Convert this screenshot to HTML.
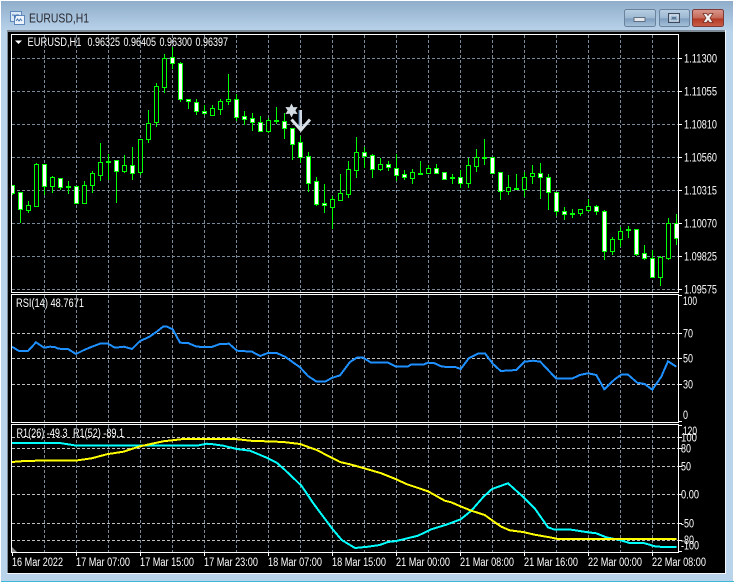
<!DOCTYPE html>
<html><head><meta charset="utf-8"><title>EURUSD,H1</title>
<style>
html,body{margin:0;padding:0;background:#fff;width:736px;height:582px;overflow:hidden}
svg{display:block}
text{font-family:"Liberation Sans",sans-serif;font-size:11.5px;fill:#fff}
</style></head><body>
<svg width="736" height="582" viewBox="0 0 736 582" xmlns="http://www.w3.org/2000/svg">
<defs>
<linearGradient id="tb" x1="0" y1="0" x2="0" y2="1"><stop offset="0" stop-color="#8fadca"/><stop offset="1" stop-color="#b9d2ea"/></linearGradient>
<linearGradient id="bt" x1="0" y1="0" x2="0" y2="1"><stop offset="0" stop-color="#b9cfe3"/><stop offset=".5" stop-color="#9cb8d2"/><stop offset=".55" stop-color="#7f9fbf"/><stop offset="1" stop-color="#a6c2dc"/></linearGradient>
<linearGradient id="cl" x1="0" y1="0" x2="0" y2="1"><stop offset="0" stop-color="#d8988c"/><stop offset=".5" stop-color="#c66a58"/><stop offset=".55" stop-color="#b53a24"/><stop offset="1" stop-color="#c8604a"/></linearGradient>
<clipPath id="p1"><rect x="12" y="35" width="666" height="257"/></clipPath>
<clipPath id="p2"><rect x="12" y="295" width="666" height="127"/></clipPath>
<clipPath id="p3"><rect x="12" y="425" width="666" height="127"/></clipPath>
</defs>
<path d="M1 4Q1 1 4 1H730Q733 1 733 4V582H1Z" fill="#b8d3ea"/>
<rect x="1" y="1" width="732" height="30" fill="url(#tb)"/>
<rect x="1" y="581" width="733" height="1" fill="#3fb9d9"/>
<rect x="7" y="30" width="718" height="2" fill="#7d8a96"/>
<rect x="7" y="32" width="718" height="541" fill="#000"/>
<rect x="7" y="30" width="1" height="544" fill="#7d8a96"/>
<rect x="7" y="573" width="718" height="1" fill="#f4f8fb"/>
<rect x="725" y="30" width="1" height="544" fill="#f4f8fb"/>
<g shape-rendering="crispEdges">
<rect x="10.5" y="11.5" width="11" height="10" fill="#dbe8f6" stroke="#5e87bb"/>
<rect x="14.5" y="15.5" width="10" height="9" fill="#eef4fb" stroke="#5e87bb"/>
</g>
<path d="M12 15h2l1 3 1-3h3M16 21l1.500-2 1.500 2 1.500-2 1.500 2" fill="none" stroke="#4a78b5" stroke-width="1"/>
<text x="29" y="22.500" textLength="60" lengthAdjust="spacingAndGlyphs" style="font-size:12.500px;fill:#2a2a30">EURUSD,H1</text>
<rect x="624.500" y="9.500" width="31" height="17" rx="2" fill="url(#bt)" stroke="#6a829c"/>
<rect x="659.500" y="9.500" width="30" height="17" rx="2" fill="url(#bt)" stroke="#6a829c"/>
<rect x="692.500" y="9.500" width="31" height="17" rx="2" fill="url(#cl)" stroke="#7e3a34"/>
<rect x="634" y="17.500" width="11" height="4" fill="#e4e8ec" stroke="#4c5a6a" stroke-width=".8"/>
<rect x="668.500" y="13.500" width="11" height="9" fill="none" stroke="#3e4a5a" stroke-width="1"/>
<rect x="670" y="15" width="8" height="6" fill="none" stroke="#dfe6ee" stroke-width="1"/>
<rect x="672" y="17" width="4" height="2" fill="#5d7893"/>
<path d="M703 13.500l3.500 0 1.500 2 1.500-2 3.500 0-3 4.500 3 4.500h-3.500l-1.500-2-1.500 2h-3.500l3-4.500z" fill="#f2f2f2" stroke="#6e2a22" stroke-width=".7"/>
<g fill="none" stroke="#778899" stroke-dasharray="3 2" shape-rendering="crispEdges">
<path d="M44.500 35V292M76.500 35V292M108.500 35V292M140.500 35V292M172.500 35V292M204.500 35V292M236.500 35V292M268.500 35V292M300.500 35V292M332.500 35V292M364.500 35V292M396.500 35V292M428.500 35V292M460.500 35V292M492.500 35V292M524.500 35V292M556.500 35V292M588.500 35V292M620.500 35V292M652.500 35V292"/>
<path d="M44.500 295V422M76.500 295V422M108.500 295V422M140.500 295V422M172.500 295V422M204.500 295V422M236.500 295V422M268.500 295V422M300.500 295V422M332.500 295V422M364.500 295V422M396.500 295V422M428.500 295V422M460.500 295V422M492.500 295V422M524.500 295V422M556.500 295V422M588.500 295V422M620.500 295V422M652.500 295V422"/>
<path d="M44.500 425V552M76.500 425V552M108.500 425V552M140.500 425V552M172.500 425V552M204.500 425V552M236.500 425V552M268.500 425V552M300.500 425V552M332.500 425V552M364.500 425V552M396.500 425V552M428.500 425V552M460.500 425V552M492.500 425V552M524.500 425V552M556.500 425V552M588.500 425V552M620.500 425V552M652.500 425V552"/>
<path d="M12 58.500H678M12 91.500H678M12 124.500H678M12 157.500H678M12 190.500H678M12 223.500H678M12 256.500H678M12 289.500H678"/>
</g>
<g fill="none" stroke="#c0c0c0" stroke-dasharray="3 2" shape-rendering="crispEdges">
<path d="M12 333.500H678M12 358.500H678M12 384.500H678"/>
<path d="M12 437.500H678M12 448.500H678M12 466.500H678M12 494.500H678M12 523.500H678M12 540.500H678"/>
</g>
<g clip-path="url(#p1)" shape-rendering="crispEdges" stroke="#0f0">
<path fill="none" d="M12.500 186V195M20.500 209V223M28.500 201V213M36.500 163V207M44.500 186V195M52.500 176V193M60.500 187V190M68.500 181V194M84.500 181V204M92.500 171V193M100.500 143V181M108.500 154V180M116.500 171V203M124.500 155V173M132.500 147V180M140.500 172V175M148.500 110V143M156.500 83V127M164.500 54V93M172.500 47V69M180.500 62V102M188.500 101V109M196.500 99V115M204.500 105V115M212.500 105V115M220.500 99V115M228.500 74V105M236.500 94V121M244.500 111V125M252.500 113V131M260.500 116V132M268.500 118V133M276.500 107V124M284.500 113V139M292.500 144V160M300.500 136V163M308.500 152V192M316.500 177V206M324.500 184V213M332.500 196V229M340.500 174V201M348.500 161V198M356.500 137V178M364.500 147V168M372.500 154V178M380.500 158V171M388.500 161V171M396.500 154V181M404.500 170V180M412.500 169V184M420.500 161V175M428.500 165V174M436.500 164V174M452.500 174V184M460.500 170V188M468.500 158V188M476.500 149V172M484.500 139V165M492.500 157V174M500.500 191V200M508.500 175V195M516.500 174V190M524.500 172V197M532.500 165V184M540.500 163V199M548.500 174V210M556.500 211V216M564.500 207V220M572.500 209V218M580.500 209V216M588.500 199V212M596.500 205V215M604.500 210V260M612.500 237V255M620.500 227V247M628.500 226V238M636.500 254V256M644.500 245V260M652.500 250V278M660.500 256V286M668.500 218V260M676.500 214V245"/>
<path fill="#fff" d="M10.500 185.500h4v8h-4zM18.500 192.500h4v17h-4zM42.500 164.500h4v22h-4zM58.500 178.500h4v9h-4zM74.500 186.500h4v17h-4zM114.500 160.500h4v11h-4zM130.500 165.500h4v8h-4zM170.500 57.500h4v6h-4zM178.500 63.500h4v36h-4zM186.500 99.500h4v2h-4zM194.500 102.500h4v9h-4zM202.500 111.500h4v2h-4zM234.500 99.500h4v18h-4zM242.500 116.500h4v3h-4zM250.500 118.500h4v4h-4zM258.500 122.500h4v9h-4zM282.500 121.500h4v7h-4zM290.500 128.500h4v16h-4zM298.500 142.500h4v15h-4zM306.500 156.500h4v27h-4zM314.500 181.500h4v23h-4zM322.500 203.500h4v2h-4zM362.500 152.500h4v4h-4zM370.500 155.500h4v14h-4zM386.500 164.500h4v3h-4zM394.500 168.500h4v7h-4zM402.500 174.500h4v3h-4zM434.500 168.500h4v5h-4zM442.500 172.500h4v7h-4zM458.500 177.500h4v6h-4zM490.500 157.500h4v16h-4zM498.500 172.500h4v19h-4zM538.500 173.500h4v4h-4zM546.500 177.500h4v15h-4zM554.500 192.500h4v19h-4zM562.500 211.500h4v3h-4zM594.500 206.500h4v5h-4zM602.500 211.500h4v40h-4zM634.500 229.500h4v25h-4zM642.500 253.500h4v5h-4zM650.500 258.500h4v19h-4zM674.500 223.500h4v15h-4z"/>
<path fill="#000" d="M26.500 205.500h4v5h-4zM34.500 164.500h4v42h-4zM50.500 177.500h4v9h-4zM82.500 185.500h4v18h-4zM90.500 173.500h4v12h-4zM98.500 162.500h4v13h-4zM122.500 165.500h4v6h-4zM138.500 139.500h4v33h-4zM146.500 123.500h4v16h-4zM154.500 86.500h4v36h-4zM162.500 58.500h4v29h-4zM210.500 108.500h4v7h-4zM218.500 101.500h4v8h-4zM226.500 99.500h4v2h-4zM266.500 120.500h4v11h-4zM330.500 199.500h4v8h-4zM338.500 193.500h4v7h-4zM346.500 169.500h4v25h-4zM354.500 152.500h4v18h-4zM378.500 164.500h4v5h-4zM410.500 172.500h4v6h-4zM426.500 168.500h4v5h-4zM466.500 165.500h4v18h-4zM474.500 157.500h4v9h-4zM506.500 187.500h4v4h-4zM522.500 177.500h4v12h-4zM530.500 173.500h4v3h-4zM578.500 209.500h4v4h-4zM586.500 206.500h4v4h-4zM610.500 239.500h4v12h-4zM618.500 231.500h4v8h-4zM658.500 257.500h4v20h-4zM666.500 223.500h4v35h-4z"/>
<path fill="#0f0" d="M66.500 186.500h4v1h-4zM106.500 161.500h4v1h-4zM274.500 120.500h4v1h-4zM418.500 173.500h4v1h-4zM450.500 177.500h4v1h-4zM482.500 157.500h4v1h-4zM514.500 188.500h4v1h-4zM570.500 213.500h4v1h-4zM626.500 229.500h4v1h-4z"/>
</g>
<path d="M291.500 103.500L293.400 107.300 297.600 107 295.400 110.500 297.600 114 293.400 113.700 291.500 117.500 289.600 113.700 285.400 114 287.600 110.500 285.400 107 289.600 107.300z" fill="#d3dbe3"/>
<path d="M300.500 110V129" stroke="#cfd8e2" stroke-width="3" fill="none"/>
<path d="M299 110V126" stroke="#3f6f9f" stroke-width="1" fill="none"/>
<path d="M291.500 119.500L300.800 130L310 119.500" stroke="#d8dfe6" stroke-width="3" fill="none"/>
<g clip-path="url(#p2)"><polyline shape-rendering="crispEdges" fill="none" stroke="#1e90ff" stroke-width="2" points="12,346.700 19,351 28,351 36,342.300 44,347.700 50,346.700 55,347 58,348.700 68,349 76,354 84,350 92,346.700 100,343.700 108,343.700 115,347.700 124,346.700 132,349 140,341 149,337 156.700,331.700 163,326.700 167,326.700 172.700,329.300 180,342.700 188,343 196.700,346.700 211.700,347 220,344 229,343.700 237,350.700 252,351.700 260,356 268,353 276.700,353 285,356.700 300,367.300 308,376 316.700,381.700 325,381.700 331.700,378 340,375.300 350,362 356.700,357.700 363,357.700 368,360.700 371,362.700 388,362.700 396.300,366.700 407.300,366.700 411,364.700 423,364.700 428,362.700 434.700,363.300 442,366.700 455.300,367 460.700,369 469,358 478,353.700 485.300,353.700 493,364 500.700,371 516.300,370 524.700,361.700 533,360.700 540.300,361.700 556.300,378.700 572,378.700 579.700,375 588,373.300 596.300,375 604.300,389.300 614.700,379.300 621.300,374.700 628,374.700 637.300,382.700 644.700,384 652.300,389.700 661.300,376.700 668,361.300 676.300,366.700"/></g>
<g clip-path="url(#p3)">
<polyline shape-rendering="crispEdges" fill="none" stroke="#0ff" stroke-width="2" points="12,443 60,443 76.700,445.700 140,445.700 190,445.700 196.700,445.700 206.700,443.700 213.300,444.300 223.300,445.700 236.700,449 250,450.700 266.700,457.700 276.700,462.700 285,470 301.700,486 313.300,503.300 333.300,530 341.700,540 355,548 368,546.700 379.700,545 388,542 396.300,541 418,535.700 431.300,529.300 446.300,524.700 460.700,519.300 471.300,510.700 483,497.300 492,489 508,483.300 524.700,498.300 534.700,508.300 548,527.300 554.700,529.700 571.300,529.700 588,532.300 596.300,533.300 606.300,537.300 619.700,540 629.700,543 643.700,543 656.300,546.700 676.300,547"/>
<polyline shape-rendering="crispEdges" fill="none" stroke="#ff0" stroke-width="2" points="12,462 20,461.300 36.700,460.700 75,460.700 91.700,458.300 106.700,454.300 123.300,451.700 140,446.300 163.300,441.300 183.300,439 235,439 253.300,441 266.700,441.300 283.300,442 300,444 316.700,450 340,462 350,464.300 366.700,469 381.300,473.300 396.300,479.300 406.300,484 428,491.300 444.700,500.700 451.300,502.300 459.700,506 471.300,510.700 484.700,515 493,521 501.300,526.700 509.700,530.300 523,532 534.700,534.700 549.700,537.300 558,539 676.300,539"/>
</g>
<path d="M12 547l5 5h-5z" fill="#8a8a8a"/>
<g fill="none" stroke="#fff" shape-rendering="crispEdges">
<rect x="11.500" y="34.500" width="667" height="258"/>
<rect x="11.500" y="294.500" width="667" height="128"/>
<rect x="11.500" y="424.500" width="667" height="128"/>
<path d="M679 58.500h3M679 91.500h3M679 124.500h3M679 157.500h3M679 190.500h3M679 223.500h3M679 256.500h3M679 289.500h3M679 295.500h3M679 333.500h3M679 358.500h3M679 384.500h3M679 421.500h3M679 425.500h3M679 437.500h3M679 448.500h3M679 466.500h3M679 494.500h3M679 523.500h3M679 540.500h3M679 551.500h3"/>
<path d="M12.500 553v3M76.500 553v3M140.500 553v3M204.500 553v3M268.500 553v3M332.500 553v3M396.500 553v3M460.500 553v3M524.500 553v3M588.500 553v3M652.500 553v3"/>
</g>
<path d="M15 40.500h7l-3.500 3.500z" fill="#fff"/>
<text x="27.500" y="46" textLength="54" lengthAdjust="spacingAndGlyphs">EURUSD,H1</text>
<text x="87.500" y="46" textLength="32.500" lengthAdjust="spacingAndGlyphs">0.96325</text>
<text x="123.500" y="46" textLength="32.500" lengthAdjust="spacingAndGlyphs">0.96405</text>
<text x="159.500" y="46" textLength="32.500" lengthAdjust="spacingAndGlyphs">0.96300</text>
<text x="195.500" y="46" textLength="32.500" lengthAdjust="spacingAndGlyphs">0.96397</text>
<text x="16" y="307" textLength="68" lengthAdjust="spacingAndGlyphs">RSI(14) 48.7671</text>
<text x="16.500" y="437" textLength="51" lengthAdjust="spacingAndGlyphs">R1(26) -49.3</text>
<text x="73" y="437" textLength="51" lengthAdjust="spacingAndGlyphs">R1(52) -89.1</text>
<g>
<text x="684" y="62.500" textLength="33" lengthAdjust="spacingAndGlyphs">1.11300</text>
<text x="684" y="95.500" textLength="33" lengthAdjust="spacingAndGlyphs">1.11055</text>
<text x="684" y="128.500" textLength="33" lengthAdjust="spacingAndGlyphs">1.10810</text>
<text x="684" y="161.500" textLength="33" lengthAdjust="spacingAndGlyphs">1.10560</text>
<text x="684" y="194.500" textLength="33" lengthAdjust="spacingAndGlyphs">1.10315</text>
<text x="684" y="227.500" textLength="33" lengthAdjust="spacingAndGlyphs">1.10070</text>
<text x="684" y="260.500" textLength="33" lengthAdjust="spacingAndGlyphs">1.09825</text>
<text x="684" y="293.500" textLength="33" lengthAdjust="spacingAndGlyphs">1.09575</text>
<text x="683" y="305" textLength="14" lengthAdjust="spacingAndGlyphs">100</text>
<text x="683" y="337.500" textLength="10" lengthAdjust="spacingAndGlyphs">70</text>
<text x="683" y="362.500" textLength="10" lengthAdjust="spacingAndGlyphs">50</text>
<text x="683" y="388.500" textLength="10" lengthAdjust="spacingAndGlyphs">30</text>
<text x="683" y="419" textLength="5" lengthAdjust="spacingAndGlyphs">0</text>
<text x="683" y="435" textLength="14" lengthAdjust="spacingAndGlyphs">120</text>
<text x="681" y="441.500" textLength="16" lengthAdjust="spacingAndGlyphs">100</text>
<text x="681" y="452.500" textLength="10" lengthAdjust="spacingAndGlyphs">80</text>
<text x="681" y="470.500" textLength="10" lengthAdjust="spacingAndGlyphs">50</text>
<text x="681" y="498.500" textLength="18" lengthAdjust="spacingAndGlyphs">0.00</text>
<text x="681" y="527.500" textLength="13" lengthAdjust="spacingAndGlyphs">-50</text>
<text x="681" y="544" textLength="13" lengthAdjust="spacingAndGlyphs">-80</text>
<text x="681" y="549.500" textLength="18" lengthAdjust="spacingAndGlyphs">-100</text>
<text x="12" y="566" textLength="51" lengthAdjust="spacingAndGlyphs">16 Mar 2022</text>
<text x="76" y="566" textLength="54" lengthAdjust="spacingAndGlyphs">17 Mar 07:00</text>
<text x="140" y="566" textLength="54" lengthAdjust="spacingAndGlyphs">17 Mar 15:00</text>
<text x="204" y="566" textLength="54" lengthAdjust="spacingAndGlyphs">17 Mar 23:00</text>
<text x="268" y="566" textLength="54" lengthAdjust="spacingAndGlyphs">18 Mar 07:00</text>
<text x="332" y="566" textLength="54" lengthAdjust="spacingAndGlyphs">18 Mar 15:00</text>
<text x="396" y="566" textLength="54" lengthAdjust="spacingAndGlyphs">21 Mar 00:00</text>
<text x="460" y="566" textLength="54" lengthAdjust="spacingAndGlyphs">21 Mar 08:00</text>
<text x="524" y="566" textLength="54" lengthAdjust="spacingAndGlyphs">21 Mar 16:00</text>
<text x="588" y="566" textLength="54" lengthAdjust="spacingAndGlyphs">22 Mar 00:00</text>
<text x="652" y="566" textLength="54" lengthAdjust="spacingAndGlyphs">22 Mar 08:00</text>
</g>
</svg>
</body></html>
